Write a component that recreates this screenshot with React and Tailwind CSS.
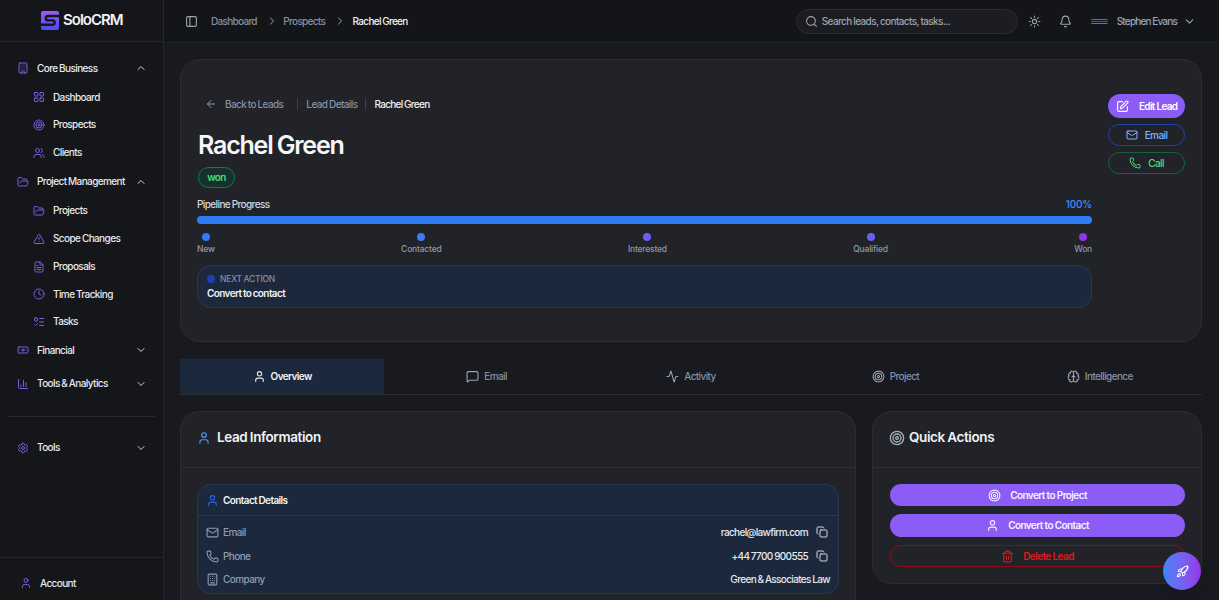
import React from "react";
import {
  PanelLeft, Building, LayoutGrid, Target, Users, FolderOpen, TriangleAlert, FileText, Clock, ListTodo,
  Banknote, ChartColumn, Settings, User, ChevronUp, ChevronDown, ChevronRight, Search, Sun, Bell, ArrowLeft,
  SquarePen, Mail, Phone, MessageSquare, Activity, Brain, Copy, Trash2, Rocket,
} from "lucide-react";

const Logo = () => (
  <svg width="18" height="19" viewBox="0 0 18 19">
    <defs>
      <linearGradient id="lg" x1="0" y1="0" x2="0" y2="1">
        <stop offset="0" stopColor="#9a5cf5" />
        <stop offset="1" stopColor="#4a4ff0" />
      </linearGradient>
    </defs>
    <rect width="18" height="19" rx="2" fill="url(#lg)" />
    <path d="M18 5H7a2.2 2.2 0 0 0 0 4.4h4.5a2.2 2.2 0 0 1 0 4.4H0" fill="none" stroke="#15161a" strokeWidth="2.4" />
  </svg>
);

const Group = ({ icon: Icon, label, open, className = "" }) => (
  <div className={`flex items-center h-6 pl-[16px] pr-[16px] ${className}`}>
    <Icon size={12} className="text-[#7c5be6] ml-[0.5px] mr-[8.5px] shrink-0" />
    <span className="flex-1 text-[10px] font-medium text-[#e8e9ee] whitespace-nowrap">{label}</span>
    {open ? <ChevronUp size={12} className="text-[#d4d4d8] shrink-0" /> : <ChevronDown size={12} className="text-[#d4d4d8] shrink-0" />}
  </div>
);

const Item = ({ icon: Icon, label, className = "" }) => (
  <div className={`flex items-center h-5 pl-[32.5px] ${className}`}>
    <Icon size={12} className="text-[#7c5be6] mr-[8.5px] shrink-0" />
    <span className="text-[10px] font-medium text-[#e8e9ee]">{label}</span>
  </div>
);

const Sidebar = () => (
  <aside className="w-[164px] shrink-0 h-full flex flex-col bg-[#151619] border-r border-[#24262b]">
    <div className="h-[42px] shrink-0 flex items-center pl-[41px] gap-[4px] border-b border-[#24262b]">
      <Logo />
      <span className="text-[15px] font-semibold text-[#f1f2f5] tracking-[-1px]">SoloCRM</span>
    </div>
    <nav className="flex-1 flex flex-col pt-[14px]">
      <Group icon={Building} label="Core Business" open />
      <Item icon={LayoutGrid} label="Dashboard" className="mt-[7px]" />
      <Item icon={Target} label="Prospects" className="mt-[7.5px]" />
      <Item icon={Users} label="Clients" className="mt-[8px]" />
      <Group icon={FolderOpen} label="Project Management" open className="mt-[7px]" />
      <Item icon={FolderOpen} label="Projects" className="mt-[7px]" />
      <Item icon={TriangleAlert} label="Scope Changes" className="mt-[8px]" />
      <Item icon={FileText} label="Proposals" className="mt-[8px]" />
      <Item icon={Clock} label="Time Tracking" className="mt-[7.5px]" />
      <Item icon={ListTodo} label="Tasks" className="mt-[7.5px]" />
      <Group icon={Banknote} label="Financial" className="mt-[6.5px]" />
      <Group icon={ChartColumn} label="Tools & Analytics" className="mt-[9.5px]" />
      <div className="mx-2 mt-[20px] h-px bg-[#2a2b30]" />
      <Group icon={Settings} label="Tools" className="mt-[19px]" />
    </nav>
    <div className="h-[43px] shrink-0 flex items-center pl-[20px] pt-2 gap-[8px] border-t border-[#24262b]">
      <User size={12} className="text-[#7c5be6]" />
      <span className="text-[10px] font-medium text-[#e8e9ee]">Account</span>
    </div>
  </aside>
);

const Avatar = () => (
  <div className="w-[17px] h-[17px] rounded-full bg-[#10161f] flex flex-col justify-center gap-[1px] overflow-hidden">
    <div className="h-px bg-[#6b7280]" />
    <div className="h-px bg-[#4b5563]" />
    <div className="h-px bg-[#6b7280]" />
  </div>
);

const Header = () => (
  <header className="h-[43px] shrink-0 flex items-center bg-[#141518] border-b border-[#1e2530] pl-[21px] pr-[23px] tracking-[-0.7px]">
    <PanelLeft size={13} className="text-[#9ca3af]" />
    <span className="ml-[13px] text-[10px] text-[#8390a5]">Dashboard</span>
    <ChevronRight size={12} className="ml-[9px] text-[#9ca3af]" />
    <span className="ml-[5.5px] text-[10px] text-[#8390a5]">Prospects</span>
    <ChevronRight size={12} className="ml-[8.5px] text-[#9ca3af]" />
    <span className="ml-[7px] text-[10px] font-medium text-[#f1f2f5]">Rachel Green</span>
    <div className="ml-auto w-[222px] h-[25px] flex items-center gap-[4px] rounded-full bg-[#1c1d22] border border-[#2c2d33] pl-[8px] tracking-[-0.6px]">
      <Search size={13} className="text-[#a1a1aa]" />
      <span className="text-[10px] text-[#9ca3af]">Search leads, contacts, tasks...</span>
    </div>
    <Sun size={13} className="ml-[10.5px] text-[#9ca3af]" />
    <Bell size={13} className="ml-[18px] text-[#9ca3af]" />
    <div className="ml-[18.5px]"><Avatar /></div>
    <span className="ml-[9px] text-[10px] tracking-[-0.8px] text-[#9aa5b8]">Stephen Evans</span>
    <ChevronDown size={13} className="ml-[6px] text-[#9ca3af]" />
  </header>
);

const steps = [
  { label: "New", color: "bg-[#2f7cf6]" },
  { label: "Contacted", color: "bg-[#3f7cf0]" },
  { label: "Interested", color: "bg-[#6d5ff0]" },
  { label: "Qualified", color: "bg-[#6a62ee]" },
  { label: "Won", color: "bg-[#9333ea]" },
];

const LeadCard = () => (
  <section className="h-[283px] shrink-0 flex rounded-[20px] bg-[#222328] border border-[#2d2e34] pl-[16px] pr-[16px] pt-[34px]">
    <div className="w-[895px] flex flex-col">
      <div className="h-5 flex items-center text-[10px] pl-[8px]">
        <ArrowLeft size={12} className="text-[#8f9bb0]" />
        <span className="ml-[8px] text-[#8390a5]">Back to Leads</span>
        <span className="ml-[14px] w-px h-3 bg-[#3a3f4a]" />
        <span className="ml-[8px] text-[#8390a5]">Lead Details</span>
        <span className="ml-[8px] w-px h-3 bg-[#3a3f4a]" />
        <span className="ml-[8px] tracking-[-0.7px] text-[#f1f2f5]">Rachel Green</span>
      </div>
      <h1 className="mt-[15px] ml-px h-8 leading-8 text-[25px] font-semibold tracking-[-1.2px] [word-spacing:-1px] text-[#f5f6f8]">Rachel Green</h1>
      <div className="mt-[6px] ml-px self-start h-[21px] w-[37px] flex items-center justify-center rounded-full bg-[#16302a] border border-[#0f7a58] text-[10px] font-semibold text-[#4ade80]">won</div>
      <div className="mt-[8px] h-4 flex items-center justify-between text-[10px]">
        <span className="text-[#d4d7dd]">Pipeline Progress</span>
        <span className="text-[#3f8cff] tracking-[-0.2px]">100%</span>
      </div>
      <div className="mt-[4px] h-2 rounded-full bg-[#2f7cf6]" />
      <div className="mt-[9px] flex justify-between">
        {steps.map((s) => (
          <div key={s.label} className="flex flex-col items-center">
            <div className={`w-2 h-2 rounded-full ${s.color}`} />
            <span className="mt-[2px] text-[8.5px] leading-[12px] tracking-[-0.2px] text-[#8f99ab]">{s.label}</span>
          </div>
        ))}
      </div>
      <div className="mt-[10px] h-[43px] rounded-[14px] bg-[#1c283c] border border-[#2b3950] pl-[9px] pt-[7px]">
        <div className="flex items-center gap-[5px]">
          <div className="w-2 h-2 rounded-full bg-[#1e40af]" />
          <span className="text-[8.5px] leading-3 tracking-[-0.2px] text-[#8390a5]">NEXT ACTION</span>
        </div>
        <div className="mt-[1px] text-[10px] leading-[14px] font-semibold text-[#f1f2f5]">Convert to contact</div>
      </div>
    </div>
    <div className="ml-[16px] w-[77px] flex flex-col gap-[6px]">
      <button className="h-[24px] flex items-center pl-[8px] gap-[10px] rounded-full bg-[#8b5cf6] text-[10px] font-semibold tracking-[-0.7px] text-white">
        <SquarePen size={13} />Edit Lead
      </button>
      <button className="h-[22px] flex items-center justify-center gap-[7px] rounded-full border border-[#1e40af] text-[10px] font-medium text-[#7db4ff]">
        <Mail size={12} />Email
      </button>
      <button className="h-[22px] flex items-center justify-center gap-[7px] rounded-full border border-[#14633a] text-[10px] font-medium text-[#4ade80]">
        <Phone size={12} />Call
      </button>
    </div>
  </section>
);

const tabs = [
  { label: "Overview", icon: User, active: true },
  { label: "Email", icon: MessageSquare },
  { label: "Activity", icon: Activity },
  { label: "Project", icon: Target },
  { label: "Intelligence", icon: Brain },
];

const Tabs = () => (
  <div className="mt-[17px] h-[36px] shrink-0 grid grid-cols-5 border-b border-[#2d2e34]">
    {tabs.map((t) => (
      <div
        key={t.label}
        className={`flex items-center justify-center gap-[5px] text-[10px] ${t.active ? "bg-[#1c283c] text-[#f1f2f5] font-semibold" : "text-[#8390a5]"}`}
      >
        <t.icon size={13} className={t.active ? "text-[#e5e7eb]" : "text-[#9ca3af]"} />
        {t.label}
      </div>
    ))}
  </div>
);

const Row = ({ icon: Icon, label, value, copy, className = "" }) => (
  <div className={`h-5 flex items-center ${className}`}>
    <Icon size={13} className="text-[#8f9bb0]" />
    <span className="ml-[4px] text-[10px] text-[#8f9bb0]">{label}</span>
    <span className="ml-auto text-[10px] font-medium tracking-[-0.65px] text-[#e8e9ee]">{value}</span>
    {copy && <Copy size={12} className="ml-[8px] mr-[2px] text-[#d4d4d8]" />}
  </div>
);

const LeadInfo = () => (
  <section className="flex-1 h-[220px] rounded-t-[20px] bg-[#222328] border border-[#2d2e34] border-b-0">
    <div className="h-[56px] flex items-center pl-[16px] pb-[4px] gap-[6px] border-b border-[#2d2e34]">
      <User size={14} className="text-[#4b9bff]" />
      <span className="text-[13.5px] font-semibold tracking-[-0.4px] text-[#f1f2f5]">Lead Information</span>
    </div>
    <div className="mx-[16px] mt-[16px] h-[110px] rounded-[14px] bg-[#1c283c] border border-[#2b3950]">
      <div className="h-[31px] flex items-center pl-[8px] gap-[4px] border-b border-[#2b3950]">
        <User size={13} className="text-[#2563eb]" />
        <span className="text-[10px] font-semibold text-[#f1f2f5]">Contact Details</span>
      </div>
      <div className="pl-[8px] pr-[8px] pt-[6px]">
        <Row icon={Mail} label="Email" value="rachel@lawfirm.com" copy />
        <Row icon={Phone} label="Phone" value="+44 7700 900555" copy className="mt-[4px]" />
        <Row icon={Building} label="Company" value="Green & Associates Law" className="mt-[3px]" />
      </div>
    </div>
  </section>
);

const QuickActions = () => (
  <section className="w-[330px] h-[173px] shrink-0 rounded-[20px] bg-[#222328] border border-[#2d2e34]">
    <div className="h-[56px] flex items-center pl-[16px] pb-[4px] gap-[4px] border-b border-[#2d2e34]">
      <Target size={16} className="text-[#a8b0bd]" />
      <span className="text-[13.5px] font-semibold tracking-[-0.4px] text-[#f1f2f5]">Quick Actions</span>
    </div>
    <div className="ml-[17px] mr-[16px] mt-[16px] flex flex-col gap-[8px]">
      <button className="h-[22px] flex items-center justify-center gap-[9px] rounded-full bg-[#8b5cf6] text-[10px] font-semibold text-[#f5f3ff]">
        <Target size={13} />Convert to Project
      </button>
      <button className="h-[23px] flex items-center justify-center gap-[9px] rounded-full bg-[#8b5cf6] text-[10px] font-semibold text-[#f5f3ff]">
        <User size={13} />Convert to Contact
      </button>
      <button className="h-[22px] flex items-center justify-center gap-[9px] rounded-full border border-[#8a0f14] text-[10px] font-semibold text-[#dc1a20]">
        <Trash2 size={13} />Delete Lead
      </button>
    </div>
  </section>
);

export default function App() {
  return (
    <div className="h-[600px] w-full flex overflow-hidden bg-[#191a1f] font-['Inter','Liberation_Sans',sans-serif] font-medium tracking-[-0.6px] [word-spacing:-0.5px]">
      <Sidebar />
      <div className="flex-1 min-w-0 flex flex-col">
        <Header />
        <main className="flex-1 min-h-0 overflow-hidden pl-[16px] pr-[17px] pt-[16px] flex flex-col">
          <LeadCard />
          <Tabs />
          <div className="mt-[16px] flex items-start gap-[16px]">
            <LeadInfo />
            <QuickActions />
          </div>
        </main>
      </div>
      <button className="fixed left-[1163px] top-[552px] w-[38px] h-[38px] rounded-full flex items-center justify-center text-white bg-gradient-to-r from-[#3b82f6] to-[#9333ea] shadow-lg">
        <Rocket size={13} />
      </button>
    </div>
  );
}
